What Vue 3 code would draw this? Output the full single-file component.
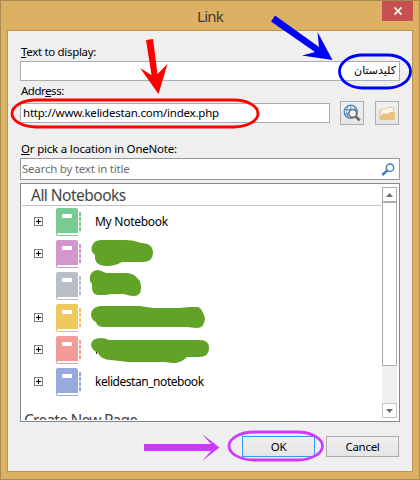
<script setup>
const books = [
  { color: '#7acb92', name: 'My Notebook', expand: true },
  { color: '#d297cd', name: '', expand: true },
  { color: '#b8bfc7', name: '', expand: false },
  { color: '#f0c95e', name: '', expand: true },
  { color: '#f29b99', name: '', expand: true },
  { color: '#96aade', name: 'kelidestan_notebook', expand: true },
]
</script>

<template>
  <div class="window">
    <header class="titlebar">
      <h1>Link</h1>
      <button class="close" aria-label="Close">
        <svg width="10" height="8" viewBox="0 0 10 8"><path d="M1.500 .5 8.500 7.500M8.500 .5 1.500 7.500" stroke="#fff" stroke-width="1.700" /></svg>
      </button>
    </header>
    <main class="body">
      <div class="label l1"><span><u>T</u>ext to display:</span></div>
      <div class="field display"><span dir="rtl">کلیدستان</span></div>
      <div class="label l2"><span>Addr<u>e</u>ss:</span></div>
      <div class="address-row">
        <div class="field address"><span>http://www.kelidestan.com/index.php</span></div>
        <button class="tool">
          <svg width="18" height="18" viewBox="0 0 18 18" fill="none">
            <circle cx="7.800" cy="7.800" r="6.600" fill="#f8fbfd" stroke="#4b88bd" stroke-width="1.300" />
            <path d="M1.500 5.600h12.600M1.500 10h7M7.800 1v13M5.400 1.600q-3.400 6 0 12.200M10.200 1.600q1.800 2 2.200 4" stroke="#4b88bd" />
            <circle cx="9.700" cy="9.400" r="3.900" fill="#eef1f3" stroke="#6b6b6b" stroke-width="1.500" />
            <path d="m12.700 12.400 4 4" stroke="#6b6b6b" stroke-width="2.800" />
          </svg>
        </button>
        <button class="tool folder">
          <svg width="17" height="15" viewBox="0 0 17 15">
            <path d="M1 13V4.500H2.500V3H7L8.500 1.500H14.500V9" fill="#fff8ea" stroke="#ecc98f" />
            <path d="M.5 14V5h1v5.500L4 7.500h5.500L11 6h5v7l-1 1z" fill="#e9c17f" />
          </svg>
        </button>
      </div>
      <div class="label l3"><span><u>O</u>r pick a location in OneNote:</span></div>
      <div class="search">
        <span>Search by text in title</span>
        <svg width="14" height="13" viewBox="0 0 14 13" fill="none" stroke="#4980b8">
          <circle cx="9" cy="4.700" r="3.700" stroke-width="1.500" /><path d="m6.200 7.500-5 4.500" stroke-width="2.500" />
        </svg>
      </div>
      <section class="list">
        <div class="tree">
          <h2><span>All Notebooks</span></h2>
          <div v-for="(b, i) in books" :key="i" class="book">
            <div class="expander"><svg v-if="b.expand" width="9" height="9" viewBox="0 0 9 9" shape-rendering="crispEdges"><path d="M.5.5h8v8h-8z" fill="#fff" stroke="#808080" /><path d="M2 4.500h5M4.500 2v5" stroke="#000" /></svg></div>
            <svg class="cover" width="26" height="28" viewBox="0 0 26 28">
              <path d="M2 0H20Q22 0 22 2V25H2L1 26V27H22V28H1.500Q0 28 0 26V2Q0 0 2 0z" :fill="b.color" />
              <rect x="6" y="6" width="10" height="4" rx=".7" fill="#fff" />
              <path d="M23 4h2v4h-2zM23 9h2v4h-2zM23 14h2v4h-2zM23 19h2v4h-2z" :fill="b.color" />
            </svg>
            <span class="name" :class="{ long: i === 5 }">{{ b.name }}</span>
          </div>
          <h3><span>Create New Page</span></h3>
        </div>
        <div class="scroll">
          <div class="sbtn"><svg width="7" height="4" viewBox="0 0 7 4"><path d="M3.500 0 7 4H0z" fill="#6d6d6d" /></svg></div>
          <div class="thumb"></div>
          <div class="track"></div>
          <div class="sbtn down"><svg width="7" height="4" viewBox="0 0 7 4"><path d="M0 0h7L3.500 4z" fill="#6d6d6d" /></svg></div>
        </div>
      </section>
      <footer>
        <button class="btn ok"><span>OK</span></button>
        <button class="btn"><span>Cancel</span></button>
      </footer>
    </main>
    <svg class="marks" width="420" height="480" viewBox="0 0 420 480" fill="none">
      <path d="M96 352h1v2h-1z" fill="#402020" />
      <g fill="#60a327">
        <path d="M101 240H126Q134 240 141 243Q153 243 153 253Q153 262 142 262H122Q115 266 107 266Q94 266 95 255Q90 251 92 246Q94 240 101 240z" />
        <path d="M98 270Q102 271 106 273H126Q134 273 138 279Q141 281 141 288Q141 296 134 296Q129 296 124 294H112L105 295H98Q91 295 92 284Q89 281 90 276Q92 270 98 270z" />
        <path d="M100 306H140L153 308H179L190 307H198Q202 308 205 318Q205 328 196 328L187 327H104Q97 327 96 322Q91 320 91 314Q92 307 100 306z" />
        <path d="M101 338Q105 338 109 340H200Q209 340 209 348Q209 357 199 357H187Q181 363 174 363L164 362H128L111 360Q101 360 98 353Q91 350 91 344Q92 338 101 338z" />
      </g>
      <rect x="12" y="100" width="246" height="27" rx="24" ry="13.500" stroke="#f00" stroke-width="2.800" />
      <rect x="339.500" y="55" width="71" height="33" rx="23" ry="16.500" stroke="#00f" stroke-width="2.800" />
      <rect x="229" y="432" width="93.500" height="28" rx="25" ry="14" stroke="#cf38fd" stroke-width="2.800" />
      <path d="M146 40 153 39 157.500 74 167.500 64 158.500 94 140 68 151.500 75z" fill="#f00" />
      <path d="M275 15.500 271 21.500 315 52 302 55.500 332.500 60 317.500 32 319 47z" fill="#00f" />
      <path d="M144 444H211L202 434 219.500 447.500 202 461 211 451H144z" fill="#cf38fd" />
    </svg>
  </div>
</template>

<style>
body { overflow: hidden; }
</style>

<style scoped>
* { box-sizing: border-box; }
.window { position: relative; width: 420px; height: 480px; background: #dcb163; border: 1px solid #a98b52; padding: 0 6px 7px; font: 12px/16px "Noto Sans", "Open Sans", sans-serif; color: #000; display: flex; flex-direction: column; }
.titlebar { height: 29px; display: flex; justify-content: center; flex: none; padding-left: 31px; }
h1 { margin: 4px 0 0; flex: 1; text-align: center; font-size: 15px; letter-spacing: -.8px; line-height: 22px; font-weight: 400; color: #403a30; }
button { padding: 0; border: 0; font: inherit; border-radius: 0; }
.close { width: 31px; height: 20px; background: #c75050; display: flex; align-items: center; justify-content: center; }
.body { flex: 1; border: 1px solid #b89451; background: #efefef; padding: 13px 12px 0; display: flex; flex-direction: column; min-height: 0; }
.label { height: 17px; flex: none; white-space: nowrap; padding-left: 1px; font-size: 11.500px; letter-spacing: -.32px; }
u { text-underline-offset: 1px; }
.field { height: 20px; border: 1px solid #abadb3; background: #fff; line-height: 17px; padding: 0 3px 0 2px; flex: none; white-space: nowrap; }
.display { display: flex; justify-content: flex-end; font-family: "DejaVu Sans", sans-serif; font-size: 11px; width: 380px; }
.l2 { margin-top: 2px; letter-spacing: -.48px; }
.address-row { height: 28px; display: flex; }
.address { width: 310px; margin-top: 3px; font-size: 11.500px; letter-spacing: -.22px; line-height: 18px; }
.tool { width: 24px; height: 24px; margin: 1px 0 0 10px; border: 1px solid #acacac; background: linear-gradient(#f0f0f0, #e5e5e5); display: flex; align-items: center; justify-content: center; flex: none; }
.folder { margin-left: 11px; }
.l3 { margin-top: 13px; letter-spacing: -.2px; }
.search { width: 380px; height: 22px; flex: none; border: 1px solid #999; background: #fff; display: flex; justify-content: space-between; padding: 2px 4px 0 1px; color: #6d6d6d; font-size: 11.500px; letter-spacing: -.22px; }
.search svg { margin-top: 2px; }
.list { width: 380px; height: 239px; margin-top: 3px; flex: none; border: 1px solid #828790; background: #fff; display: flex; padding: 3px 2px 3px 1px; }
.tree { width: 149px; flex: 1; overflow: hidden; margin: -3px 0 -2px; padding-top: 3px; }
h2, h3 { margin: 0; font-size: 15.500px; line-height: 20px; font-weight: 400; color: #444; white-space: nowrap; letter-spacing: -.52px; }
h2 { height: 19px; border-bottom: 1px solid #c3c3c3; padding-left: 9px; line-height: 17px; }
.book { height: 32px; display: flex; padding-top: 2px; }
.expander { width: 34px; padding: 9px 0 0 12px; line-height: 0; }
.cover { flex: none; width: 26px; }
.name { margin: 6px 0 0 13px; white-space: nowrap; letter-spacing: -.27px; }
.long { letter-spacing: -.45px; }
h3 { padding-left: 2px; margin-top: 12px; letter-spacing: -.74px; }
.scroll { width: 15px; margin-left: 1px; display: flex; flex-direction: column; background: #f0f0f0; }
.sbtn { height: 15px; border: 1px solid #ababab; background: #fff; display: flex; align-items: center; justify-content: center; flex: none; }
.down { border-color: #c3c3c3; }
.thumb { height: 164px; border: 1px solid #ababab; background: #fff; flex: none; }
.track { flex: 1; }
footer { display: flex; gap: 11px; justify-content: flex-end; padding: 14px 1px 0 0; }
.btn { width: 73px; height: 21px; border: 1px solid #acacac; background: linear-gradient(#f0f0f0, #e5e5e5); line-height: 18px; font-size: 11.500px; color: #000; letter-spacing: -.3px; }
.ok { border-color: #3399ff; }
.marks { position: absolute; left: -1px; top: -1px; pointer-events: none; }
</style>
